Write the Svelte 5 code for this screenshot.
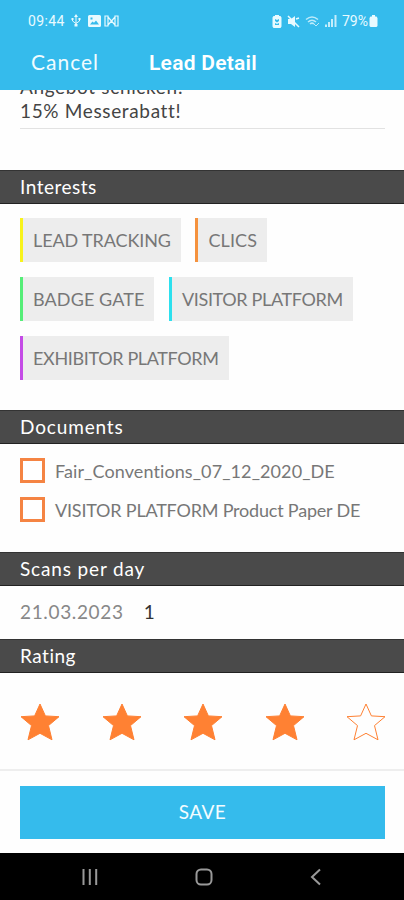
<script lang="ts">
  interface Interest {
    name: string;
    color: string;
    spacing: number;
  }

  const interests: Interest[] = [
    { name: "LEAD TRACKING", color: "#f8f31c", spacing: -0.1 },
    { name: "CLICS", color: "#f5923e", spacing: 0.1 },
    { name: "BADGE GATE", color: "#55ee78", spacing: 0.1 },
    { name: "VISITOR PLATFORM", color: "#2ce0ee", spacing: -0.35 },
    { name: "EXHIBITOR PLATFORM", color: "#c44be6", spacing: -0.35 },
  ];

  let documents = $state([
    { name: "Fair_Conventions_07_12_2020_DE", checked: false },
    { name: "VISITOR PLATFORM Product Paper DE", checked: false },
  ]);

  let rating = $state(4);
</script>

<div class="screen">
  <div class="status-bar">
    <span class="clock">09:44</span>
    <svg class="usb" width="10" height="14" viewBox="0 0 10 14">
      <path d="M5 2v9M1.500 5v2L5 9.500 8.500 7V5" fill="none" stroke="currentColor" />
      <path d="M5 0l2 3H3zM3.500 10h3v2.500h-3zM.5 4h2v2h-2zM7.500 4h2v2h-2z" fill="currentColor" />
    </svg>
    <svg class="gallery" width="13" height="12" viewBox="0 0 13 12">
      <path
        fill="currentColor"
        fill-rule="evenodd"
        d="M1.500 0h10A1.500 1.500 0 0 1 13 1.500v9a1.500 1.500 0 0 1-1.500 1.500h-10A1.500 1.500 0 0 1 0 10.500v-9A1.500 1.500 0 0 1 1.500 0zM2 9.500h9L8 5.500l-2 2.200-1.500-1.200zM2.500 2.500v2h2v-2z"
      />
    </svg>
    <svg class="mail" width="15" height="12" viewBox="0 0 15 12">
      <path
        d="M1 1h3v10H1zM11 1h3v10h-3zM4 2l3.500 4L11 2M4 10l3.500-4L11 10"
        fill="none"
        stroke="currentColor"
        stroke-width="1.200"
      />
    </svg>

    <div class="status-right">
      <svg width="10" height="13" viewBox="0 0 10 13">
        <path
          fill="currentColor"
          fill-rule="evenodd"
          d="M3 0h4v1h1.500l1 1.500v9L8.500 13h-7l-1-1.500v-9L1.500 1H3zM3 4v2l2 1.500L7 6V4L5 5zm0 4v2h4V8L5 9z"
        />
      </svg>
      <svg width="13" height="13" viewBox="0 0 13 13">
        <path d="M1 4h3l4-3v11L4 9H1z" fill="currentColor" />
        <path d="M1 1l11 11M9 4l3-1" stroke="currentColor" stroke-width="1.500" />
      </svg>
      <svg class="wifi" width="15" height="13" viewBox="0 0 15 13">
        <path
          d="M1 4.500q6-5 12 0M3 7q4-3.500 8 0M5 9q2-1.800 4 0"
          fill="none"
          stroke="currentColor"
          stroke-width="1.600"
        />
        <path d="M9 9l2 2 3-3" fill="none" stroke="currentColor" />
      </svg>
      <svg class="signal" width="12" height="12" viewBox="0 0 12 12">
        <path d="M1 12V9.500M4 12V7M7 12V4M10.500 12V0" stroke="currentColor" stroke-width="2" />
      </svg>
      <span class="battery-level">79%</span>
      <svg width="9" height="12" viewBox="0 0 9 12">
        <path d="M3 0h3v1.500h1.500l1 1.500v8l-1 1h-6l-1-1V3l1-1.500H3z" fill="currentColor" />
      </svg>
    </div>
  </div>

  <header>
    <span class="cancel">Cancel</span>
    <h1>Lead Detail</h1>
  </header>

  <main>
    <div class="notes">
      <div class="note-line first">Angebot schicken!</div>
      <div class="note-line">15% Messerabatt!</div>
    </div>

    <h2>Interests</h2>
    <div class="interests">
      {#each interests as { name, color, spacing }}
        <span class="tag" style="border-color: {color}; letter-spacing: {spacing}px">{name}</span>
      {/each}
    </div>

    <h2 class="wide">Documents</h2>
    <div class="documents">
      {#each documents as doc, i}
        <label class:product={i === 1}>
          <input type="checkbox" bind:checked={doc.checked} />
          <span>{doc.name}</span>
        </label>
      {/each}
    </div>

    <h2 class="wide">Scans per day</h2>
    <div class="scans">
      <span class="date">21.03.2023</span>
      <span class="count">1</span>
    </div>

    <h2>Rating</h2>
    <div class="rating">
      {#each [1, 2, 3, 4, 5] as value}
        <button class="star" aria-label="{value} stars" onclick={() => (rating = value)}>
          <svg width="40" height="38" viewBox="0 0 40 38">
            <path
              class:filled={value <= rating}
              d="M20 1l5.400 11.900 13.600.8-10.500 8.900L32 36.800l-12-6.500-12 6.500 3.500-14.200L1 13.700l13.600-.8z"
            />
          </svg>
        </button>
      {/each}
    </div>
  </main>

  <footer>
    <button class="save">SAVE</button>
  </footer>

  <nav>
    <svg width="16" height="16" viewBox="0 0 16 16">
      <path d="M1.500 0v16M7.800 0v16M14.200 0v16" />
    </svg>
    <svg width="18" height="18" viewBox="0 0 18 18">
      <rect x="1.500" y="1.500" width="15" height="15" rx="4.500" />
    </svg>
    <svg width="12" height="18" viewBox="0 0 12 18">
      <path d="M10 1.500L2 9l8 7.500" />
    </svg>
  </nav>
</div>

<style>
  :global(body) {
    margin: 0;
  }

  .screen {
    background: #fefefe;
    color: #444;
    display: flex;
    flex-direction: column;
    font-family: Lato, sans-serif;
    font-size: 18px;
    font-variant-ligatures: none;
    height: 900px;
    overflow: hidden;
    width: 404px;
  }

  .screen * {
    box-sizing: border-box;
  }

  svg {
    display: block;
    flex: none;
  }

  .status-bar {
    align-items: center;
    background: #35bbec;
    color: #e8faff;
    display: flex;
    flex: none;
    font-family: Roboto, sans-serif;
    font-size: 14px;
    height: 42px;
    padding: 0 26px 0 28px;
    position: relative;
    z-index: 1;
  }

  .clock {
    letter-spacing: 0.4px;
    width: 43px;
  }

  .gallery {
    margin-left: 7px;
  }

  .mail {
    margin-left: 3px;
  }

  .status-right {
    align-items: center;
    display: flex;
    gap: 5px;
    margin-left: auto;
  }

  .wifi {
    opacity: 0.75;
  }

  .signal {
    opacity: 0.8;
  }

  .battery-level {
    margin-right: -4px;
  }

  header {
    align-items: center;
    background: #35bbec;
    color: #f0fcff;
    display: flex;
    flex: none;
    height: 48px;
    padding: 0 31px 7px;
    position: relative;
    z-index: 1;
  }

  .cancel {
    font-size: 21px;
    letter-spacing: 1px;
    margin-top: -2px;
    width: 118px;
  }

  h1 {
    color: #fff;
    font-family: Roboto, sans-serif;
    font-size: 21px;
    font-weight: 600;
    letter-spacing: 0.25px;
    margin: 0;
  }

  main {
    flex: 1;
  }

  .notes {
    border-bottom: 1.5px solid #e2e2e2;
    display: flow-root;
    height: 39px;
    margin: 0 19px 41px 20px;
  }

  .note-line {
    font-size: 19px;
    letter-spacing: 0.65px;
    line-height: 24px;
  }

  .note-line.first {
    margin-top: -15px;
  }

  h2 {
    background: #4a4a4a;
    border-bottom: 1px solid #222;
    border-top: 1px solid #333;
    color: #fff;
    font-size: 19px;
    font-weight: 400;
    height: 34px;
    letter-spacing: 0.5px;
    line-height: 32px;
    margin: 0;
    padding: 0 20px;
  }

  h2.wide {
    letter-spacing: 0.85px;
  }

  .interests {
    align-content: flex-start;
    display: flex;
    flex-wrap: wrap;
    gap: 15px 14.5px;
    height: 206px;
    padding: 14px 20px 0;
  }

  .tag {
    background: #ededed;
    border-left: 3.5px solid;
    color: #777;
    height: 44px;
    line-height: 44px;
    padding: 0 10px;
    white-space: nowrap;
  }

  .documents {
    display: flex;
    flex-direction: column;
    gap: 15px;
    height: 108px;
    padding: 14px 20px 0;
  }

  label {
    align-items: center;
    color: #777;
    display: flex;
    gap: 10px;
    height: 25px;
    letter-spacing: 0.1px;
    white-space: nowrap;
  }

  label.product {
    letter-spacing: -0.2px;
    margin-top: -1px;
  }

  input {
    appearance: none;
    background: #fff;
    border: 3px solid #f58443;
    height: 25px;
    margin: 0;
    width: 25px;
  }

  input:checked {
    background: #f47b32;
  }

  .scans {
    align-items: center;
    color: #888;
    display: flex;
    font-size: 19px;
    gap: 20px;
    height: 53px;
    padding: 0 20px 2px;
  }

  .date {
    letter-spacing: 0.65px;
  }

  .count {
    color: #333;
  }

  .rating {
    display: flex;
    justify-content: space-between;
    padding: 30px 18px 0 20px;
  }

  .star {
    background: none;
    border: 0;
    padding: 0;
  }

  .star path {
    fill: none;
    stroke: #ff8133;
    stroke-width: 1;
  }

  .star path.filled {
    fill: #ff8133;
  }

  footer {
    border-top: 2px solid #eee;
    flex: none;
    height: 84px;
    padding: 15px 19px 0 20px;
  }

  .save {
    background: #35bbec;
    border: 0;
    color: #f3fcff;
    display: block;
    font-family: Lato, sans-serif;
    font-size: 19px;
    height: 53px;
    letter-spacing: 0.4px;
    padding: 0 0 2px;
    width: 100%;
  }

  nav {
    align-items: center;
    background: #000;
    display: flex;
    flex: none;
    height: 47px;
    justify-content: space-between;
    padding: 0 82px;
  }

  nav svg {
    fill: none;
    stroke: #999;
    stroke-width: 2;
  }
</style>
